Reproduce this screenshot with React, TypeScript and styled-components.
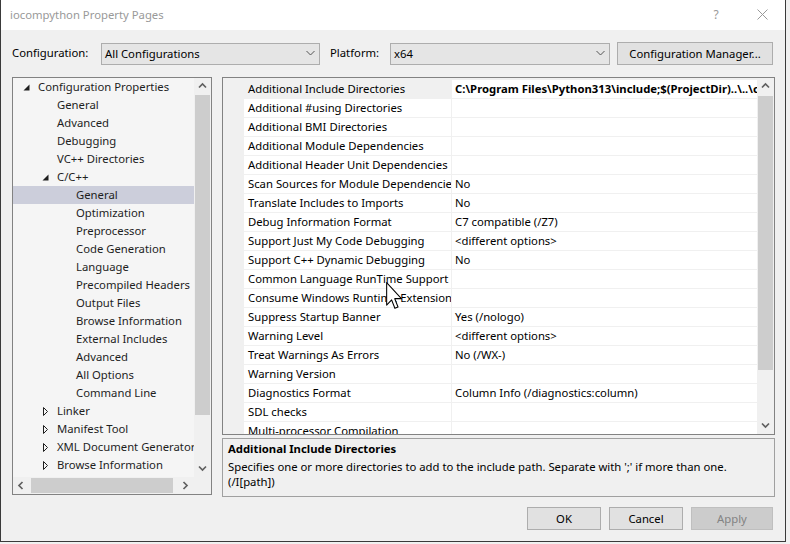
import React from "react";
import styled, { createGlobalStyle } from "styled-components";

const FONT = `"Noto Sans", "Segoe UI", "Liberation Sans", sans-serif`;

const GlobalStyle = createGlobalStyle`
  html, body {
    margin: 0;
    padding: 0;
    background: #f0f0f0;
  }
  body {
    font-family: ${FONT};
    font-size: 11.3px;
    color: #000;
  }
  * {
    box-sizing: border-box;
  }
`;

const Window = styled.div`
  position: relative;
  width: 786px;
  height: 542px;
  background: #f0f0f0;
  border: 1px solid #3a3a3a;
  border-top: none;
  overflow: hidden;
`;

const TitleBar = styled.div`
  display: flex;
  align-items: center;
  height: 30px;
  padding: 0 0 2px 9px;
  background: #fff;
  color: #999;
`;

const Title = styled.span`
  flex: 1;
`;

const CaptionButton = styled.div`
  width: 46px;
  height: 28px;
  display: flex;
  align-items: center;
  justify-content: center;
  color: #999;
  font-size: 12px;
`;

const Toolbar = styled.div`
  display: flex;
  align-items: center;
  height: 23px;
  margin: 12px 0 0 11px;
`;

const FieldLabel = styled.span<{ $w: number; $gap?: number }>`
  width: ${(p) => p.$w}px;
  margin-left: ${(p) => p.$gap || 0}px;
  padding-bottom: 2px;
  flex: none;
`;

const Combo = styled.div<{ $w: number }>`
  width: ${(p) => p.$w}px;
  height: 22px;
  flex: none;
  display: flex;
  align-items: center;
  justify-content: space-between;
  padding: 0 4px 1px 3px;
  background: #e5e5e5;
  border: 1px solid #adadad;
`;

const Button = styled.div<{ $w: number; $disabled?: boolean }>`
  width: ${(p) => p.$w}px;
  height: 23px;
  flex: none;
  display: flex;
  align-items: center;
  justify-content: center;
  padding-bottom: 1px;
  background: ${(p) => (p.$disabled ? "#cccccc" : "#e1e1e1")};
  border: 1px solid ${(p) => (p.$disabled ? "#bfbfbf" : "#adadad")};
  color: ${(p) => (p.$disabled ? "#838383" : "#000")};
`;

const ManagerButton = styled(Button)`
  margin-left: 7px;
`;

const Main = styled.div`
  display: grid;
  grid-template-columns: 200px 553px;
  column-gap: 10px;
  align-items: start;
  margin: 12px 0 0 11px;
`;

const TreePanel = styled.div`
  height: 418px;
  border: 1px solid #828282;
  background: #f5f5f5;
  display: grid;
  grid-template-columns: 1fr 17px;
  grid-template-rows: 1fr 17px;
`;

const TreeBody = styled.div`
  overflow: hidden;
`;

const TreeRow = styled.div<{ $level: number; $selected?: boolean }>`
  height: 18px;
  display: flex;
  align-items: center;
  white-space: nowrap;
  padding-left: ${(p) => 8 + p.$level * 19}px;
  padding-bottom: 2px;
  background: ${(p) => (p.$selected ? "#cccedb" : "transparent")};
  color: #1e1e1e;
`;

const Expander = styled.span`
  width: 17px;
  flex: none;
  display: flex;
  align-items: center;
  padding: 2px 0 0 2px;
`;

const VScroll = styled.div`
  display: flex;
  flex-direction: column;
  background: #f0f0f0;
`;

const HScroll = styled.div`
  display: flex;
  align-items: stretch;
  background: #f0f0f0;
`;

const ScrollArrow = styled.div`
  width: 17px;
  height: 17px;
  flex: none;
  display: flex;
  align-items: center;
  justify-content: center;
`;

const VThumb = styled.div<{ $size: number; $offset?: number }>`
  height: ${(p) => p.$size}px;
  margin: ${(p) => p.$offset || 0}px 1px 0;
  background: #cdcdcd;
  flex: none;
`;

const HThumb = styled.div<{ $size: number }>`
  width: ${(p) => p.$size}px;
  margin: 1px 0 1px 1px;
  background: #cdcdcd;
  flex: none;
`;

const Spacer = styled.div`
  flex: 1;
`;

const Corner = styled.div`
  background: #f0f0f0;
`;

const RightColumn = styled.div`
  display: flex;
  flex-direction: column;
  gap: 3px;
`;

const GridPanel = styled.div`
  height: 358px;
  border: 1px solid #828282;
  background: #f0f0f0;
  display: grid;
  grid-template-columns: 1fr 17px;
`;

const GridBody = styled.div`
  overflow: hidden;
  padding-top: 1px;
`;

const PropRow = styled.div`
  display: grid;
  grid-template-columns: 21px 208px 1fr;
  height: 19px;
`;

const Gutter = styled.div`
  background: #f0f0f0;
`;

const Cell = styled.div<{ $selected?: boolean; $bold?: boolean; $name?: boolean }>`
  display: flex;
  align-items: center;
  overflow: hidden;
  white-space: nowrap;
  padding-left: ${(p) => (p.$name ? 4 : 3)}px;
  padding-bottom: 2px;
  border-top: 1px solid #f0f0f0;
  border-right: ${(p) => (p.$name ? "1px solid #f0f0f0" : "none")};
  background: ${(p) => (p.$selected ? "#f0f0f0" : "#fff")};
  font-weight: ${(p) => (p.$bold ? 700 : 400)};
`;

const Description = styled.div`
  height: 59px;
  border: 1px solid #a0a0a0;
  padding: 2px 5px 0;
  line-height: 15px;
`;

const DescTitle = styled.div`
  font-weight: 700;
  margin-bottom: 3px;
`;

const Footer = styled.div`
  display: flex;
  justify-content: flex-end;
  gap: 8px;
  margin: 10px 12px 0 0;
`;

const Cursor = styled.svg`
  position: absolute;
  left: 385px;
  top: 282px;
`;

type Dir = "up" | "down" | "left" | "right";

const ArrowGlyph = ({ dir }: { dir: Dir }) => {
  const pts: Record<Dir, string> = {
    up: "1,5.5 4.5,2 8,5.5",
    down: "1,2.5 4.5,6 8,2.5",
    left: "5.5,1 2,4.5 5.5,8",
    right: "2.5,1 6,4.5 2.5,8",
  };
  return (
    <svg width="9" height="9" viewBox="0 0 9 9">
      <polyline points={pts[dir]} fill="none" stroke="#606060" strokeWidth="1.7" />
    </svg>
  );
};

const ComboChevron = () => (
  <svg width="9" height="6" viewBox="0 0 9 6">
    <polyline points="0.5,1 4.5,5 8.5,1" fill="none" stroke="#555" strokeWidth="1" />
  </svg>
);

const Triangle = ({ open }: { open: boolean }) =>
  open ? (
    <svg width="7" height="7" viewBox="0 0 7 7">
      <polygon points="6.5,0.5 6.5,6.5 0.5,6.5" fill="#1e1e1e" />
    </svg>
  ) : (
    <svg width="7" height="9" viewBox="0 0 7 9" style={{ marginLeft: 1 }}>
      <polygon points="0.5,0.5 4.5,4.5 0.5,8.5" fill="none" stroke="#1e1e1e" strokeWidth="1" />
    </svg>
  );

type TreeItem = { label: string; level: number; open?: boolean; selected?: boolean };

const treeItems: TreeItem[] = [
  { label: "Configuration Properties", level: 0, open: true },
  { label: "General", level: 1 },
  { label: "Advanced", level: 1 },
  { label: "Debugging", level: 1 },
  { label: "VC++ Directories", level: 1 },
  { label: "C/C++", level: 1, open: true },
  { label: "General", level: 2, selected: true },
  { label: "Optimization", level: 2 },
  { label: "Preprocessor", level: 2 },
  { label: "Code Generation", level: 2 },
  { label: "Language", level: 2 },
  { label: "Precompiled Headers", level: 2 },
  { label: "Output Files", level: 2 },
  { label: "Browse Information", level: 2 },
  { label: "External Includes", level: 2 },
  { label: "Advanced", level: 2 },
  { label: "All Options", level: 2 },
  { label: "Command Line", level: 2 },
  { label: "Linker", level: 1, open: false },
  { label: "Manifest Tool", level: 1, open: false },
  { label: "XML Document Generator", level: 1, open: false },
  { label: "Browse Information", level: 1, open: false },
];

const properties: [string, string][] = [
  ["Additional Include Directories", "C:\\Program Files\\Python313\\include;$(ProjectDir)..\\..\\code;$(ProjectDir)..\\..\\include"],
  ["Additional #using Directories", ""],
  ["Additional BMI Directories", ""],
  ["Additional Module Dependencies", ""],
  ["Additional Header Unit Dependencies", ""],
  ["Scan Sources for Module Dependencies", "No"],
  ["Translate Includes to Imports", "No"],
  ["Debug Information Format", "C7 compatible (/Z7)"],
  ["Support Just My Code Debugging", "<different options>"],
  ["Support C++ Dynamic Debugging", "No"],
  ["Common Language RunTime Support", ""],
  ["Consume Windows Runtime Extension", ""],
  ["Suppress Startup Banner", "Yes (/nologo)"],
  ["Warning Level", "<different options>"],
  ["Treat Warnings As Errors", "No (/WX-)"],
  ["Warning Version", ""],
  ["Diagnostics Format", "Column Info (/diagnostics:column)"],
  ["SDL checks", ""],
  ["Multi-processor Compilation", ""],
];

const App = () => (
  <>
    <GlobalStyle />
    <Window>
      <TitleBar>
        <Title>iocompython Property Pages</Title>
        <CaptionButton>?</CaptionButton>
        <CaptionButton>
          <svg width="11" height="11" viewBox="0 0 11 11">
            <path d="M0.5 0.5 L10.5 10.5 M10.5 0.5 L0.5 10.5" stroke="#999" strokeWidth="1" />
          </svg>
        </CaptionButton>
      </TitleBar>

      <Toolbar>
        <FieldLabel $w={89}>Configuration:</FieldLabel>
        <Combo $w={219}>
          <span>All Configurations</span>
          <ComboChevron />
        </Combo>
        <FieldLabel $w={60} $gap={10}>Platform:</FieldLabel>
        <Combo $w={220}>
          <span>x64</span>
          <ComboChevron />
        </Combo>
        <ManagerButton $w={156}>Configuration Manager...</ManagerButton>
      </Toolbar>

      <Main>
        <TreePanel>
          <TreeBody>
            {treeItems.map((item, i) => (
              <TreeRow key={i} $level={item.level} $selected={item.selected}>
                <Expander>{item.open !== undefined && <Triangle open={item.open} />}</Expander>
                {item.label}
              </TreeRow>
            ))}
          </TreeBody>
          <VScroll>
            <ScrollArrow>
              <ArrowGlyph dir="up" />
            </ScrollArrow>
            <VThumb $size={320} />
            <Spacer />
            <ScrollArrow>
              <ArrowGlyph dir="down" />
            </ScrollArrow>
          </VScroll>
          <HScroll>
            <ScrollArrow>
              <ArrowGlyph dir="left" />
            </ScrollArrow>
            <HThumb $size={142} />
            <Spacer />
            <ScrollArrow>
              <ArrowGlyph dir="right" />
            </ScrollArrow>
          </HScroll>
          <Corner />
        </TreePanel>

        <RightColumn>
          <GridPanel>
            <GridBody>
              {properties.map(([name, value], i) => (
                <PropRow key={i}>
                  <Gutter />
                  <Cell $name $selected={i === 0}>
                    {name}
                  </Cell>
                  <Cell $bold={i === 0}>{value}</Cell>
                </PropRow>
              ))}
            </GridBody>
            <VScroll>
              <ScrollArrow>
                <ArrowGlyph dir="up" />
              </ScrollArrow>
              <VThumb $size={274} $offset={1} />
              <Spacer />
              <ScrollArrow>
                <ArrowGlyph dir="down" />
              </ScrollArrow>
            </VScroll>
          </GridPanel>

          <Description>
            <DescTitle>Additional Include Directories</DescTitle>
            <div>
              Specifies one or more directories to add to the include path. Separate with ';' if more than one.
            </div>
            <div>(/I[path])</div>
          </Description>
        </RightColumn>
      </Main>

      <Footer>
        <Button $w={74}>OK</Button>
        <Button $w={74}>Cancel</Button>
        <Button $w={82} $disabled>
          Apply
        </Button>
      </Footer>

      <Cursor width="17" height="28" viewBox="0 0 13 20" preserveAspectRatio="none">
        <path
          d="M0.5 0.5 L0.5 16.5 L4.3 12.8 L6.8 18.8 L9.2 17.8 L6.7 11.9 L11.8 11.9 Z"
          fill="#fff"
          stroke="#000"
          strokeWidth="0.8"
          strokeLinejoin="round"
        />
      </Cursor>
    </Window>
  </>
);

export default App;
